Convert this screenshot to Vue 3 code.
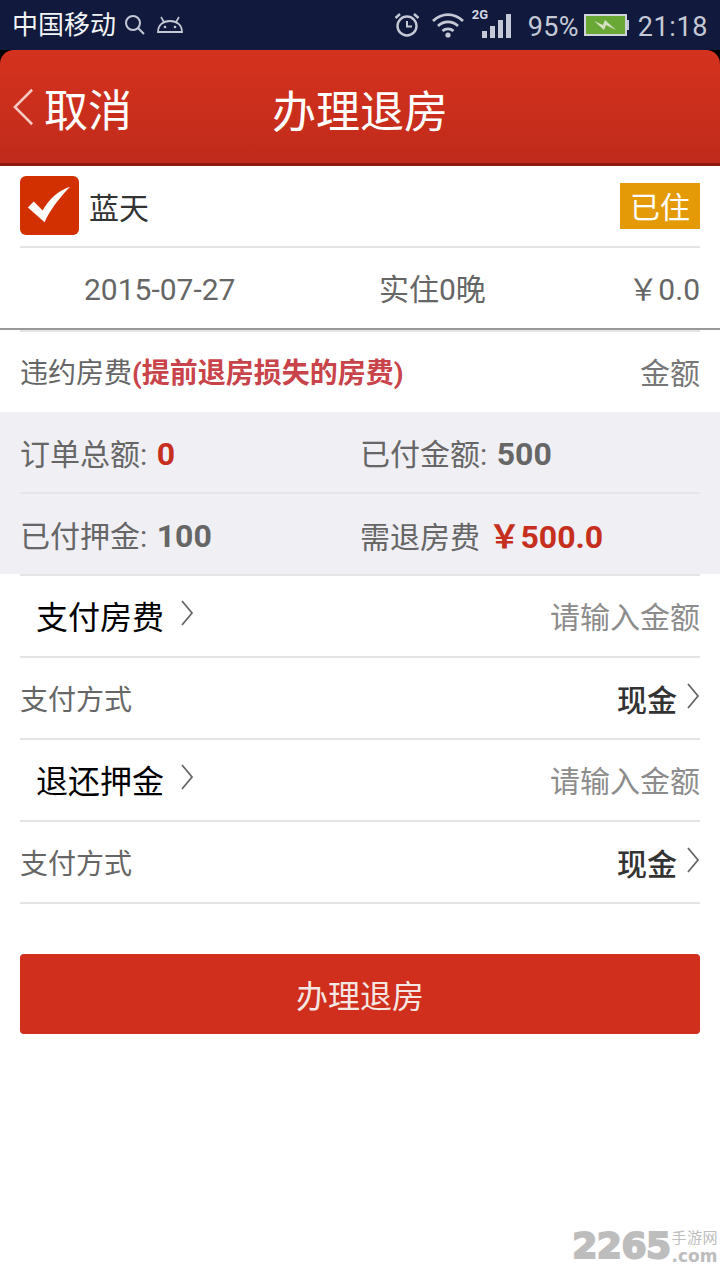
<template>
  <div class="page">
    <div class="status">
      <span class="carrier">中国移动</span>
      <svg class="ic-search" viewBox="0 0 22 22"><circle cx="9" cy="9" r="7" fill="none" stroke="#c5c9d6" stroke-width="2"/><path d="M14 14l6 6" stroke="#c5c9d6" stroke-width="2"/></svg>
      <svg class="ic-android" viewBox="0 0 28 20"><path d="M2 17c0-7 5-11 12-11s12 4 12 11z" fill="none" stroke="#c5c9d6" stroke-width="1.8"/><path d="M8 7L5 2M20 7l3-5" stroke="#c5c9d6" stroke-width="1.6"/><circle cx="9" cy="12" r="1.3" fill="#c5c9d6"/><circle cx="19" cy="12" r="1.3" fill="#c5c9d6"/></svg>
      <div class="status-right">
        <svg class="ic-alarm" viewBox="0 0 26 26"><circle cx="13" cy="14" r="9.5" fill="none" stroke="#c5c9d6" stroke-width="2.4"/><path d="M13 9v5.5h5" fill="none" stroke="#c5c9d6" stroke-width="2"/><path d="M1.5 6L6 2M24.5 6L20 2" stroke="#c5c9d6" stroke-width="2.4"/></svg>
        <svg class="ic-wifi" viewBox="0 0 34 26"><path d="M2 9c9-8.500 21-8.500 30 0M7 14c6-5.500 14-5.500 20 0M11.500 19c3-2.800 8-2.800 11 0" fill="none" stroke="#c5c9d6" stroke-width="2.800"/><circle cx="17" cy="23" r="2.600" fill="#c5c9d6"/></svg>
        <div class="signal">
          <span class="net">2G</span>
          <i class="b1"></i><i class="b2"></i><i class="b3"></i><i class="b4"></i>
        </div>
        <span class="pct">95%</span>
        <div class="battery">
          <div class="cell"><svg viewBox="0 0 24 14"><path d="M1 3l9 4 2-5 11 10-10-5-2 5z" fill="#d5e0c4"/></svg></div>
          <div class="cap"></div>
        </div>
        <span class="time">21:18</span>
      </div>
    </div>

    <div class="topwrap">
      <div class="topbar">
        <div class="back">
          <svg class="back-ic" viewBox="0 0 24 40"><path d="M21 2L3 20l18 18" fill="none" stroke="#f3c9c2" stroke-width="2.600"/></svg>
          <span>取消</span>
        </div>
        <h1>办理退房</h1>
      </div>
    </div>

    <div class="inset">
      <div class="row name-row">
        <div class="check">
          <svg viewBox="0 0 60 60"><path d="M8 32l6-6 9 9C29 25 38 15 51 11 41 21 31 34 25 47z" fill="#fff"/></svg>
        </div>
        <span class="name">蓝天</span>
        <span class="badge">已住</span>
      </div>
    </div>

    <div class="stay">
      <span>2015-07-27</span>
      <span>实住0晚</span>
      <span>￥0.0</span>
    </div>

    <div class="inset">
      <div class="row penalty">
        <span>违约房费<b>(提前退房损失的房费)</b></span>
        <span class="amount">金额</span>
      </div>
    </div>

    <div class="summary">
      <div class="sum-row line">
        <span>订单总额: <b class="red">0</b></span>
        <span>已付金额: <b>500</b></span>
      </div>
      <div class="sum-row">
        <span>已付押金: <b>100</b></span>
        <span>需退房费 <b class="red big">￥500.0</b></span>
      </div>
    </div>

    <div class="inset list">
      <template v-for="item in rows" :key="item.title">
        <div class="row pay-row">
          <span class="pay-title">{{ item.title }}<svg class="chev" viewBox="0 0 14 26"><path d="M2 1l10 12L2 25" fill="none" stroke="#666" stroke-width="1.800"/></svg></span>
          <span class="hint">请输入金额</span>
        </div>
        <div class="row pay-row method-row">
          <span class="method">支付方式</span>
          <span class="cash">现金<svg class="chev end" viewBox="0 0 14 26"><path d="M2 1l10 12L2 25" fill="none" stroke="#666" stroke-width="1.800"/></svg></span>
        </div>
      </template>
    </div>

    <button class="submit">办理退房</button>

    <div class="watermark">
      <span class="wm-num">2265</span>
      <div class="wm-side">
        <span class="wm-cn">手游网</span>
        <span class="wm-com">.com</span>
      </div>
    </div>
  </div>
</template>

<script setup>
const rows = [{ title: '支付房费' }, { title: '退还押金' }]
</script>

<style>
html, body { margin: 0; background: #fff; }
</style>

<style scoped>
.page {
  width: 720px;
  height: 1280px;
  overflow: hidden;
  background: #fff;
  font-family: Roboto, "Noto Sans CJK SC", sans-serif;
  color: #666;
  position: relative;
}

.status {
  height: 50px;
  background: #111a3c;
  display: flex;
  align-items: center;
  padding: 0 12px 0 12px;
  box-sizing: border-box;
}
.carrier { font-size: 26px; color: #f2f3f6; line-height: 50px; }
.ic-search { width: 22px; height: 22px; margin-left: 8px; }
.ic-android { width: 28px; height: 20px; margin-left: 10px; }
.status-right { margin-left: auto; display: flex; align-items: center; color: #c5c9d6; }
.ic-alarm { width: 26px; height: 26px; }
.ic-wifi { width: 34px; height: 26px; margin-left: 11px; }
.signal { position: relative; width: 39px; height: 30px; margin: 0 0 5px 7px; display: flex; align-items: flex-end; gap: 3px; padding-left: 10px; box-sizing: border-box; }
.signal i { display: block; width: 5px; background: #c5c9d6; }
.b1 { height: 7px; }
.b2 { height: 12px; }
.b3 { height: 18px; }
.b4 { height: 24px; }
.net { position: absolute; left: 0; top: 0; font-size: 13px; font-weight: 700; color: #d5d8e2; line-height: 14px; }
.pct { font-size: 27px; margin: 4px 0 0 17px; letter-spacing: 0.3px; }
.battery { display: flex; align-items: center; margin-left: 5px; }
.cell { width: 43px; height: 22px; box-sizing: border-box; border: 2px solid #d0d3dc; background: #6aa836; display: flex; align-items: center; justify-content: center; }
.cell svg { width: 24px; height: 14px; }
.cap { width: 2px; height: 10px; background: #c5c9d6; }
.time { font-size: 27px; margin: 4px 0 0 9px; letter-spacing: 0.6px; }

.topwrap { background: #000; height: 116px; }
.topbar {
  height: 116px;
  box-sizing: border-box;
  border-radius: 14px 14px 0 0;
  border-bottom: 3px solid #8e1a0e;
  background: linear-gradient(#d4321e, #c92e1c 60%, #bf2a1a);
  display: flex;
  align-items: center;
  justify-content: center;
  position: relative;
  color: #fff;
}
.topbar h1 { margin: 13px 0 0; font-size: 44px; font-weight: 400; line-height: 60px; }
.back { position: absolute; left: 12px; top: 32px; display: flex; align-items: center; font-size: 44px; line-height: 60px; }
.back-ic { width: 23px; height: 42px; margin: 0 9px 10px 0; }

.inset { margin: 0 20px; }
.row { display: flex; align-items: center; justify-content: space-between; box-sizing: border-box; border-bottom: 2px solid #e4e4e4; padding-bottom: 2px; }

.name-row { height: 82px; padding-bottom: 0; }
.check { width: 59px; height: 59px; background: #d23000; border-radius: 6px; flex: none; margin-bottom: 2px; }
.check svg { width: 59px; height: 59px; display: block; }
.name { font-size: 30px; color: #333; margin-left: 10px; margin-right: auto; }
.badge { width: 80px; height: 46px; background: #e39a06; color: #fff; font-size: 30px; line-height: 50px; text-align: center; }

.stay {
  height: 82px;
  box-sizing: border-box;
  border-bottom: 2px solid #999;
  padding: 3px 20px 0 84px;
  display: grid;
  grid-template-columns: 295px 1fr auto;
  align-items: center;
  font-size: 30px;
  line-height: 40px;
  color: #666;
}

.penalty { height: 82px; border-top: 2px solid #e4e4e4; border-bottom: 0; font-size: 28px; color: #666; }
.penalty b { color: #c9444a; font-weight: 700; font-size: 28px; }
.amount { color: #777; font-size: 30px; }

.summary { background: #efeff4; height: 162px; padding: 0 20px; box-sizing: border-box; }
.sum-row { height: 80px; display: grid; grid-template-columns: 340px 1fr; align-items: center; font-size: 30px; color: #666; box-sizing: border-box; }
.sum-row.line { height: 82px; border-bottom: 2px solid #e6e6e8; }
.sum-row b { font-weight: 700; color: #666; font-size: 32px; margin-left: 2px; }
.sum-row b.red { color: #c62f1d; }
.sum-row b.big { font-size: 32px; margin-left: 1px; }

.list { border-top: 2px solid #e4e4e4; }
.pay-row { height: 82px; }
.method-row { padding-bottom: 0; }
.pay-title { font-size: 32px; color: #000; margin-left: 16px; display: flex; align-items: center; }
.chev { width: 14px; height: 26px; margin-left: 16px; margin-bottom: 4px; }
.chev.end { margin-left: 9px; }
.hint { font-size: 30px; color: #8c8c8c; }
.method { font-size: 28px; color: #666; }
.cash { font-size: 30px; color: #333; font-weight: 500; display: flex; align-items: center; }

.submit {
  display: block;
  width: 680px;
  height: 80px;
  margin: 50px 20px 0;
  border: 0;
  border-radius: 4px;
  background: #cf2f1c;
  color: #f4e6e2;
  font-family: inherit;
  font-size: 32px;
}

.watermark { position: absolute; right: 2px; bottom: 14px; display: flex; align-items: flex-end; color: #bdbdbd; }
.wm-num { font-family: "DejaVu Sans", sans-serif; font-weight: 700; font-size: 36px; line-height: 40px; letter-spacing: -0.5px; -webkit-text-stroke: 2px #bdbdbd; }
.wm-side { display: flex; flex-direction: column; margin-left: 1px; }
.wm-cn { font-size: 15px; line-height: 18px; letter-spacing: 0.5px; text-align: right; }
.wm-com { font-family: "DejaVu Sans", sans-serif; font-weight: 700; font-size: 17px; line-height: 19px; }
</style>
